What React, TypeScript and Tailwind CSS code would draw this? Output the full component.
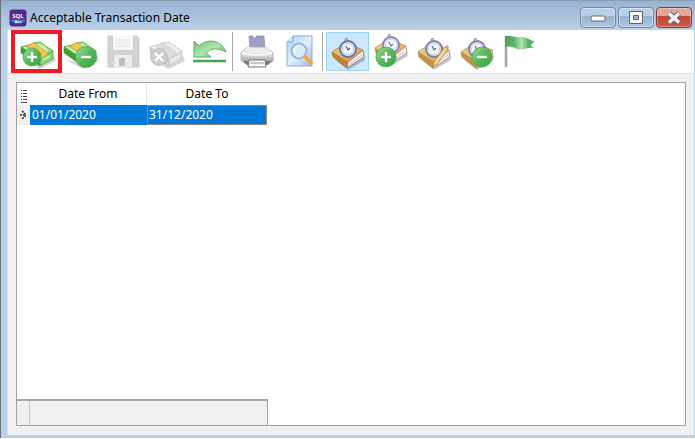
import type { ReactNode } from "react";

function Defs() {
  return (
    <svg className="absolute h-0 w-0" aria-hidden="true">
      <defs>
        <linearGradient id="green" x1="0" y1="0" x2="1" y2="1">
          <stop offset="0" stopColor="#a5dfa0" />
          <stop offset="0.5" stopColor="#55b757" />
          <stop offset="1" stopColor="#37a443" />
        </linearGradient>
        <linearGradient id="note" x1="0" y1="0" x2="1" y2="1">
          <stop offset="0" stopColor="#6fc95a" />
          <stop offset="0.5" stopColor="#b5ee9c" />
          <stop offset="1" stopColor="#5cc04e" />
        </linearGradient>
        <linearGradient id="book" x1="0" y1="0" x2="1" y2="1">
          <stop offset="0" stopColor="#f2cf8c" />
          <stop offset="0.5" stopColor="#e2b368" />
          <stop offset="1" stopColor="#c8923f" />
        </linearGradient>
        <linearGradient id="flag" x1="0" y1="0" x2="1" y2="0">
          <stop offset="0" stopColor="#4fa25c" />
          <stop offset="0.3" stopColor="#5db268" />
          <stop offset="0.55" stopColor="#b4e3b3" />
          <stop offset="0.8" stopColor="#4fae5e" />
          <stop offset="1" stopColor="#7cc686" />
        </linearGradient>
        <linearGradient id="arrow" x1="0" y1="0" x2="1" y2="1">
          <stop offset="0" stopColor="#6cc172" />
          <stop offset="0.5" stopColor="#b2e3b0" />
          <stop offset="1" stopColor="#5cb864" />
        </linearGradient>
        <linearGradient id="printer" x1="0" y1="0" x2="0" y2="1">
          <stop offset="0" stopColor="#f3f3f3" />
          <stop offset="0.5" stopColor="#dadada" />
          <stop offset="1" stopColor="#8c8c8c" />
        </linearGradient>
        <linearGradient id="page" x1="0" y1="0" x2="1" y2="1">
          <stop offset="0" stopColor="#a9d3f5" />
          <stop offset="0.5" stopColor="#e3f0fd" />
          <stop offset="1" stopColor="#a7b5ea" />
        </linearGradient>
      </defs>
    </svg>
  );
}

function Icon({ children }: { children: ReactNode }) {
  return (
    <svg viewBox="0 0 43 39" className="h-[39px] w-[43px]" aria-hidden="true">
      {children}
    </svg>
  );
}

function Badge({ x, y, r, minus }: { x: number; y: number; r: number; minus?: boolean }) {
  return (
    <g>
      <circle cx={x} cy={y} r={r} fill="url(#green)" stroke="#4aa454" strokeWidth="0.8" />
      <path d={`M${x - 5} ${y}h10`} stroke="#fff" strokeWidth="2.4" />
      {!minus && <path d={`M${x} ${y - 5}v10`} stroke="#fff" strokeWidth="2.4" />}
    </g>
  );
}

function Money({ gray }: { gray?: boolean }) {
  const edge = gray ? "#c6c6c6" : "#4f9f41";
  return (
    <g strokeLinejoin="round">
      <path d="M6 28 23 37 39 29 37 24 20 30Z" fill="#777" opacity="0.3" />
      <path d="M4 15 4 21 23 34 23 27Z" fill={gray ? "#d0d0d0" : "#3f9a38"} stroke={edge} strokeWidth="0.7" />
      <path d="M23 27 36 19 36 27 23 34Z" fill={gray ? "#e0e0e0" : "#86d673"} stroke={edge} strokeWidth="0.8" />
      <path d="M4 15C8 13 12 14 16 11L23 10 36 19 23 27Z" fill={gray ? "#ebebeb" : "url(#note)"} stroke={edge} strokeWidth="0.8" />
      <path d="M10 14 17 11 30 20 30 23 23 27 21 22Z" fill={gray ? "#dedede" : "#f3c553"} stroke={gray ? "#cacaca" : "#dba53a"} strokeWidth="0.7" />
      <path d="M7 15 16 21M21 12 31 19" stroke={gray ? "#f6f6f6" : "#d9f7c8"} strokeWidth="1.4" />
      <path d="M26 28 33 24" stroke={gray ? "#f3f3f3" : "#c9f2b8"} strokeWidth="1.6" />
    </g>
  );
}

function Book() {
  return (
    <g strokeLinejoin="round">
      <path d="M8 27 22 38 39 28 38 22 22 33Z" fill="#666" opacity="0.4" />
      <path d="M6 20 7 25 21 36 22 30Z" fill="#bd8433" stroke="#a87433" strokeWidth="0.7" />
      <path d="M22 30 37 18 38 25 21 36Z" fill="#eeebf7" stroke="#a37b48" strokeWidth="0.9" />
      <path d="M24 32 36 23" stroke="#c7bfdb" strokeWidth="1" />
      <path d="M6 20 20 11 37 18 22 30Z" fill="url(#book)" stroke="#b98440" strokeWidth="0.9" />
      <circle cx="22" cy="17" r="8" fill="#dde6f3" stroke="#6a70a0" strokeWidth="1.8" />
      <circle cx="22" cy="17" r="5.6" fill="#f8fcff" stroke="#b4c4de" strokeWidth="0.8" />
      <path d="M20 14 22 18 24 16" fill="none" stroke="#4a548a" strokeWidth="1.2" />
      <path d="M19 9Q19 6 22 7" fill="none" stroke="#8a8ca8" strokeWidth="1.4" />
    </g>
  );
}

function ToolButton({ label, active, disabled, children }: { label: string; active?: boolean; disabled?: boolean; children: ReactNode }) {
  return (
    <button
      type="button"
      aria-label={label}
      title={label}
      disabled={disabled}
      className={active ? "shrink-0 bg-[#cce8ff] outline outline-1 -outline-offset-1 outline-[#99d1ff]" : "shrink-0"}
    >
      <Icon>{children}</Icon>
    </button>
  );
}

function Separator() {
  return (
    <div className="flex w-1 shrink-0">
      <div className="w-px bg-[#a5a5a5]" />
    </div>
  );
}

function CaptionButton({ label, close, children }: { label: string; close?: boolean; children: ReactNode }) {
  return (
    <button
      type="button"
      aria-label={label}
      className={
        close
          ? "flex h-[21px] w-9 items-center justify-center rounded-sm border border-[#713f4b] bg-linear-to-b from-[#e5a398] from-40% via-[#c04532] via-45% to-[#cf5a43] shadow-[inset_0_0_0_1px_#ffffff55]"
          : "flex h-[21px] w-9 items-center justify-center rounded-sm border border-[#7389a3] bg-linear-to-b from-[#b9cfe6] from-40% via-[#98b3cf] via-45% to-[#abc6e2] shadow-[inset_0_0_0_1px_#ffffff66]"
      }
    >
      <svg viewBox="0 0 18 14" className="h-[14px] w-[18px]" aria-hidden="true">
        {children}
      </svg>
    </button>
  );
}

export default function App() {
  return (
    <div className="flex h-screen flex-col bg-white pb-px font-['Noto_Sans','Open_Sans',sans-serif] text-xs text-black">
      <Defs />
      <div className="flex min-h-0 flex-1 flex-col border-l border-[#6f7176] bg-[#b9d1ea]">
        <header className="flex h-[30px] shrink-0 items-center justify-between border-t border-[#8a9db2] bg-linear-to-b from-[#98b3d1] to-[#b9d1ea] pr-[3px] pl-2">
          <div className="flex items-center gap-[3px] pt-1">
            <svg viewBox="0 0 18 18" className="h-[18px] w-[18px]" aria-hidden="true">
              <rect x="0.5" y="0.5" width="17" height="17" rx="3" fill="#59258f" />
              <path d="M2 10.5h14v2Q9 17 2 12.5Z" fill="#2f78c4" />
              <text x="9" y="8.5" textAnchor="middle" fontSize="6" fontWeight="700" fill="#fff">SQL</text>
              <text x="9" y="14" textAnchor="middle" fontSize="4" fontWeight="700" fill="#fff">Acc</text>
            </svg>
            <h1 className="text-xs">Acceptable Transaction Date</h1>
          </div>
          <div className="flex gap-0.5 pt-1">
            <CaptionButton label="Minimize">
              <rect x="2" y="5" width="14" height="5" rx="1" fill="#fff" stroke="#62666d" strokeWidth="1" />
            </CaptionButton>
            <CaptionButton label="Maximize">
              <path fillRule="evenodd" d="M2.5 0.5h13v12h-13ZM6.5 4.5v4h5v-4Z" fill="#f8f8f8" stroke="#5d6671" />
            </CaptionButton>
            <CaptionButton label="Close" close>
              <path d="M4 2.5 14 11.5M14 2.5 4 11.5" stroke="#666068" strokeWidth="5.5" />
              <path d="M4 2.5 14 11.5M14 2.5 4 11.5" stroke="#f8f8f8" strokeWidth="3.5" />
            </CaptionButton>
          </div>
        </header>

        <main className="mr-px mb-[3px] ml-1.5 flex min-h-0 flex-1 flex-col border-l border-[#d9e5f2] bg-[#f0f0f0]">
          <div role="toolbar" aria-label="Record actions" className="flex h-11 shrink-0 border-b border-[#dedede] bg-white py-0.5 pl-[9px]">
            <div className="relative flex">
              <ToolButton label="Add">
                <Money />
                <Badge x={15} y={25} r={9} />
              </ToolButton>
              <div className="pointer-events-none absolute -top-0.5 -left-1.5 h-[43px] w-[51px] border-4 border-[#ed1c24]" />
            </div>
            <ToolButton label="Delete">
              <Money />
              <Badge x={26} y={25} r={10.5} minus />
            </ToolButton>
            <ToolButton label="Save" disabled>
              <path d="M5 4h5v14h20V4h4l2 3v28H5Z" fill="#d2d2d2" stroke="#cacaca" strokeLinejoin="round" />
              <path d="M10 4h20v14H10Z" fill="#f7f7f7" />
              <path d="M13 8h14M13 11h14M13 14h14" stroke="#e0e0e0" />
              <path d="M11 23h18v12H11Z" fill="#ececec" />
              <path d="M16 26h6v8h-6Z" fill="#bebebe" />
            </ToolButton>
            <ToolButton label="Cancel" disabled>
              <Money gray />
              <circle cx="13" cy="25" r="8.5" fill="#cdcdcd" stroke="#c2c2c2" />
              <path d="M9 21 17 29M17 21 9 29" stroke="#fff" strokeWidth="2.3" />
            </ToolButton>
            <ToolButton label="Undo">
              <path d="M5 9 10 14Q15 9 23 9Q33 10 37 20Q24 13 17 21L22 25 5 25Z" fill="url(#arrow)" stroke="#5db266" strokeWidth="1" strokeLinejoin="round" />
              <path d="M4 29h33" stroke="#3fa84c" strokeWidth="2.4" />
            </ToolButton>
            <Separator />
            <ToolButton label="Print">
              <path d="M13 4h4v2h3V4h8l1 14H14Z" fill="#9f9fc4" stroke="#9494b8" strokeWidth="0.8" />
              <path d="M11 15h20l6 6v8l-5 3H10l-5-4v-7Z" fill="url(#printer)" stroke="#a2a2a2" strokeWidth="0.8" />
              <path d="M11 15h3l1 3h13l1-3h3l4 6H6Z" fill="#ececec" />
              <path d="M6 21Q21 25 36 21" fill="none" stroke="#fff" strokeWidth="1.5" />
              <path d="M7 29h28l-3 4H11Z" fill="#777" />
              <path d="M13 28h16l1 7H12Z" fill="#f6f6f6" stroke="#777" />
              <path d="M14 31h14" stroke="#999" />
            </ToolButton>
            <ToolButton label="Preview">
              <path d="M14 4h19v30H8V10Z" fill="url(#page)" stroke="#8ea9df" />
              <path d="M8 10h6V4" fill="#d5ebff" stroke="#76a9df" />
              <circle cx="20" cy="19" r="7.5" fill="#d7eefb" fillOpacity="0.9" stroke="#9db2d6" strokeWidth="2" />
              <path d="M17 15Q14 17 16 21" fill="none" stroke="#fff" strokeWidth="1.5" />
              <path d="M26 25 32 31" stroke="#eba850" strokeWidth="4" strokeLinecap="round" />
            </ToolButton>
            <Separator />
            <ToolButton label="Browse" active>
              <Book />
            </ToolButton>
            <ToolButton label="Add detail">
              <g transform="translate(0 -4)" opacity="0.85"><Book /></g>
              <Badge x={17} y={25} r={10} />
            </ToolButton>
            <ToolButton label="Edit detail">
              <g opacity="0.9"><Book /></g>
              <path d="M33 15 36 17 25 32 21 34 22 30Z" fill="#f8dc86" stroke="#b08d50" strokeWidth="0.9" />
              <path d="M33 15 35 13 37 15 36 17Z" fill="#e58c89" />
            </ToolButton>
            <ToolButton label="Delete detail">
              <g opacity="0.9"><Book /></g>
              <Badge x={27} y={25} r={10} minus />
            </ToolButton>
            <ToolButton label="Flag">
              <path d="M8 4v31" stroke="#a5a5a5" strokeWidth="2.5" />
              <path d="M7 4C14 3 17 6 22 5C28 4 31 9 37 9L33 13 36 16C29 15 26 19 19 17C15 15 12 14 7 15Z" fill="url(#flag)" />
            </ToolButton>
          </div>

          <section className="mx-2 mt-2 mb-[9px] flex min-h-0 flex-1 flex-col justify-between border border-[#9fa1a8] bg-white">
            <table className="w-[250px] table-fixed border-separate border-spacing-0">
              <colgroup>
                <col className="w-[13px]" />
                <col className="w-[117px]" />
                <col />
              </colgroup>
              <thead>
                <tr className="h-[22px]">
                  <th className="p-0" aria-label="Columns">
                    <svg viewBox="0 0 13 20" className="h-5 w-[13px]" aria-hidden="true">
                      <path d="M4 6.5h6M4 9.5h6M4 12.5h6M4 15.5h6" stroke="#444" strokeDasharray="1 1 4 0" />
                      <path d="M4 18.5h6" stroke="#444" />
                    </svg>
                  </th>
                  <th className="border-r border-[#e5e5e5] p-0 font-normal">Date From</th>
                  <th className="p-0 font-normal">Date To</th>
                </tr>
              </thead>
              <tbody>
                <tr className="h-5 text-white">
                  <td className="bg-[#f0f0f0] p-0">
                    <svg viewBox="0 0 13 18" className="h-[18px] w-[13px]" aria-label="Current row">
                      <path d="M5 5 9 9 5 13M3 9h4" fill="none" stroke="#222" strokeWidth="1.6" strokeDasharray="2 1" />
                    </svg>
                  </td>
                  <td className="bg-[#0078d7] px-0.5 py-0">01/01/2020</td>
                  <td className="bg-[#0078d7] px-0.5 py-0 outline outline-1 -outline-offset-1 outline-[#8a8580]">31/12/2020</td>
                </tr>
              </tbody>
            </table>
            <div className="flex h-[26px] w-[251px] border-t-2 border-r border-[#a5a5a5] bg-[#f0f0f0]">
              <div className="w-[13px] border-r border-[#bfc3ca]" />
            </div>
          </section>
        </main>
      </div>
    </div>
  );
}
